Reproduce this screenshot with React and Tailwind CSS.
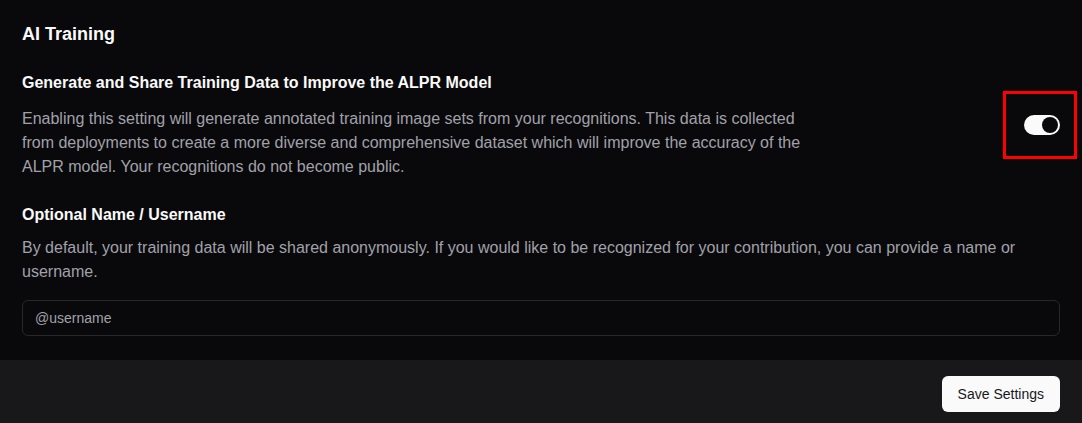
export default function App() {
  return (
    <div
      className="min-h-screen bg-[#09090b] text-[#fafafa]"
      style={{ fontFamily: '"Liberation Sans", Arial, sans-serif' }}
    >
      <div className="px-[22px] pt-5 pb-6">
        <h1 className="text-lg font-bold leading-7">AI Training</h1>

        <div className="mt-[23px] flex items-center justify-between">
          <div className="max-w-[790px]">
            <h2 className="text-base font-semibold leading-6">
              Generate and Share Training Data to Improve the ALPR Model
            </h2>
            <p className="mt-3 text-base leading-6 text-[#a1a1aa]">
              Enabling this setting will generate annotated training image sets from your
              recognitions. This data is collected from deployments to create a more diverse and
              comprehensive dataset which will improve the accuracy of the ALPR model. Your
              recognitions do not become public.
            </p>
          </div>
          <div className="relative">
            <button className="flex h-5 w-9 items-center justify-end rounded-full bg-[#fafafa] p-[2px]">
              <span className="block h-4 w-4 rounded-full bg-[#09090b]" />
            </button>
            <div className="pointer-events-none absolute -top-6 -right-[17px] -bottom-6 -left-[21px] border-[3px] border-[#ff0000]" />
          </div>
        </div>

        <div className="mt-6">
          <h2 className="text-base font-semibold leading-6">Optional Name / Username</h2>
          <p className="mt-[9px] text-base leading-6 text-[#a1a1aa]">
            By default, your training data will be shared anonymously. If you would like to be
            recognized for your contribution, you can provide a name or username.
          </p>
          <input
            type="text"
            placeholder="@username"
            className="mt-4 h-9 w-full rounded-md border border-[#27272a] bg-transparent px-3 text-sm text-[#fafafa] outline-none placeholder:text-[#a1a1aa]"
          />
        </div>
      </div>

      <div className="flex justify-end bg-[#18181b] px-[22px] py-4">
        <button className="h-9 rounded-md bg-[#fafafa] px-4 text-sm text-[#18181b]">
          Save Settings
        </button>
      </div>
    </div>
  )
}
